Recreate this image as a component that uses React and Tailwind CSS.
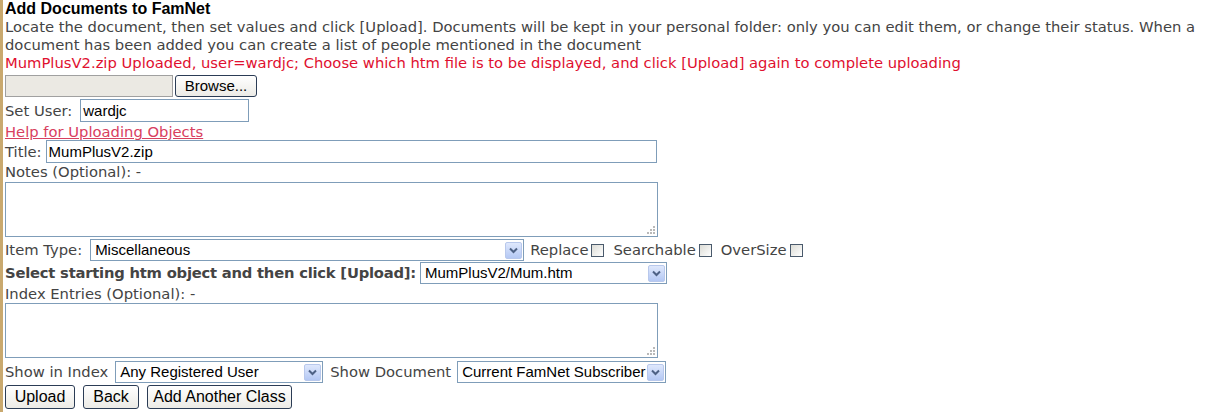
import React from 'react';

const body = { fontFamily: '"DejaVu Sans", Verdana, sans-serif' };
const arial = { fontFamily: '"Liberation Sans", Arial, sans-serif' };

const Arrow = () => (
  <span className="flex h-[17px] w-[17px] items-center justify-center rounded-[2px] border border-[#b8c8ec] bg-gradient-to-b from-[#dfe8fc] to-[#b4c8f4]">
    <svg width="9" height="7" viewBox="0 0 9 7">
      <path d="M1 1.5 L4.5 5 L8 1.5" fill="none" stroke="#4d6185" strokeWidth="2" />
    </svg>
  </span>
);

const Select = ({ value, className }) => (
  <div
    className={`flex h-[22px] items-center justify-between border border-[#7f9db9] bg-white pl-[4px] pr-[1px] text-[15px] text-black ${className}`}
    style={arial}
  >
    <span className="whitespace-nowrap">{value}</span>
    <Arrow />
  </div>
);

const Check = () => (
  <span className="mx-[3px] inline-block h-[13px] w-[13px] border border-[#4a5a6c] bg-gradient-to-br from-[#dcdcd6] to-white" />
);

const Button = ({ children, className }) => (
  <button
    className={`rounded-[3px] border border-[#2b3c55] bg-gradient-to-b from-white to-[#ecebe6] whitespace-nowrap text-black ${className}`}
    style={arial}
  >
    {children}
  </button>
);

const TextArea = () => (
  <div className="relative h-[55px] w-[653px] border border-[#7f9db9] bg-white">
    <svg className="absolute bottom-[2px] right-[2px]" width="9" height="9" viewBox="0 0 9 9">
      <g fill="#b9b9b9">
        <rect x="7" y="1" width="2" height="2" />
        <rect x="4" y="4" width="2" height="2" />
        <rect x="7" y="4" width="2" height="2" />
        <rect x="1" y="7" width="2" height="2" />
        <rect x="4" y="7" width="2" height="2" />
        <rect x="7" y="7" width="2" height="2" />
      </g>
    </svg>
  </div>
);

export default function App() {
  return (
    <div className="flex min-h-[412px] bg-white">
      <div className="w-[3px] shrink-0 bg-[#c9a96f]" />
      <div className="flex-1 pl-[2px] text-[14.75px] leading-[18px] text-[#444]" style={body}>
        <div className="text-[16px] font-bold leading-[18px] text-black" style={arial}>
          Add Documents to FamNet
        </div>
        <div className="whitespace-nowrap">
          Locate the document, then set values and click [Upload]. Documents will be kept in your personal folder: only you can edit them, or change their status. When a
          <br />
          document has been added you can create a list of people mentioned in the document
        </div>
        <div className="text-[#e0102f]">
          MumPlusV2.zip Uploaded, user=wardjc; Choose which htm file is to be displayed, and click [Upload] again to complete uploading
        </div>

        <div className="mt-[3px] flex h-[22px] items-stretch gap-[2px]">
          <div className="w-[168px] border border-[#a0a0a0] bg-[#ebe9e3]" />
          <Button className="h-[22px] w-[82px] text-[15px]">Browse...</Button>
        </div>

        <div className="mt-[2px] flex h-[23px] items-center gap-[8px]">
          <span>Set User:</span>
          <div className="flex h-[23px] w-[169px] items-center border border-[#7f9db9] pl-[2px] text-[15px] text-black" style={arial}>
            wardjc
          </div>
        </div>

        <div className="mt-[1px] h-[17px] text-[#d84060] underline">Help for Uploading Objects</div>

        <div className="flex h-[23px] items-center gap-[4px]">
          <span>Title:</span>
          <div className="flex h-[23px] w-[611px] items-center border border-[#7f9db9] pl-[2px] text-[15px] text-black" style={arial}>
            MumPlusV2.zip
          </div>
        </div>

        <div className="h-[18px]">Notes (Optional): -</div>
        <div className="mt-[1px]">
          <TextArea />
        </div>

        <div className="mt-[2px] flex h-[22px] items-center">
          <span className="mr-[8px]">Item Type:</span>
          <Select value="Miscellaneous" className="w-[434px]" />
          <span className="ml-[6px]">Replace</span>
          <Check />
          <span className="ml-[6px]">Searchable</span>
          <Check />
          <span className="ml-[6px]">OverSize</span>
          <Check />
        </div>

        <div className="mt-[1px] flex h-[22px] items-center">
          <span className="mr-[4px] font-bold tracking-[-0.22px]">Select starting htm object and then click [Upload]:</span>
          <Select value="MumPlusV2/Mum.htm" className="w-[247px]" />
        </div>

        <div className="mt-[1px] h-[17px]">Index Entries (Optional): -</div>
        <div className="mt-[1px]">
          <TextArea />
        </div>

        <div className="mt-[3px] flex h-[22px] items-center">
          <span className="mr-[7px]">Show in Index</span>
          <Select value="Any Registered User" className="w-[208px]" />
          <span className="ml-[7px] mr-[6px]">Show Document</span>
          <Select value="Current FamNet Subscriber" className="w-[209px]" />
        </div>

        <div className="mt-[2px] flex gap-[8px]">
          <Button className="h-[24px] w-[70px] text-[16px]">Upload</Button>
          <Button className="h-[24px] w-[56px] text-[16px]">Back</Button>
          <Button className="h-[24px] w-[145px] text-[16px]">Add Another Class</Button>
        </div>
      </div>
    </div>
  );
}
